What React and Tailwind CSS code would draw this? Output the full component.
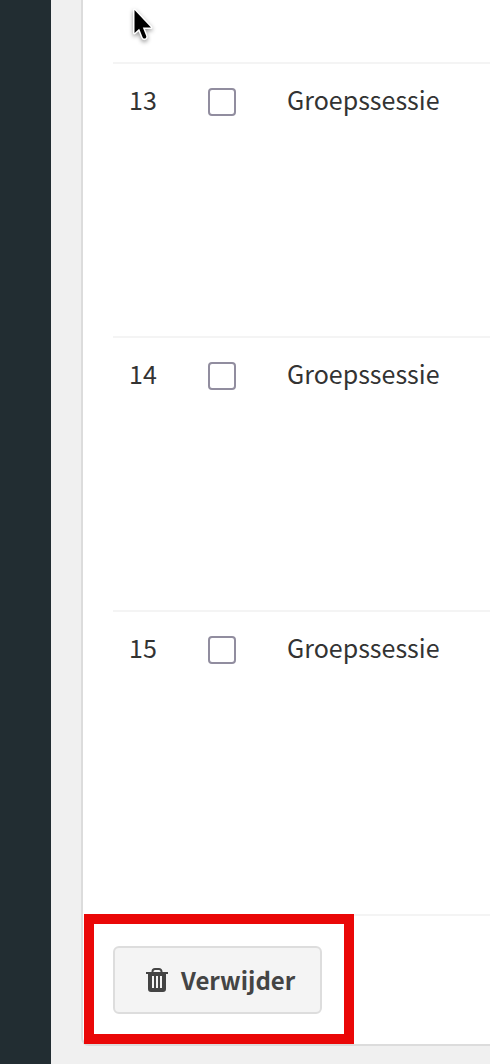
const sessions = [
  { id: 13, type: "Groepssessie" },
  { id: 14, type: "Groepssessie" },
  { id: 15, type: "Groepssessie" },
];

function TrashIcon() {
  return (
    <svg viewBox="0 0 22 24" className="w-[22px] h-6 shrink-0" aria-hidden="true">
      <path d="M6.5 4.5V3.5a2.5 2.5 0 0 1 2.5-2.5h4a2.5 2.5 0 0 1 2.5 2.5v1" fill="none" stroke="#444444" strokeWidth="2" />
      <path
        fillRule="evenodd"
        fill="#444444"
        d="M0 4h22v2h-2v15a3 3 0 0 1-3 3H5a3 3 0 0 1-3-3V6H0zM6 8v12h2V8zM10 8v12h2V8zM14 8v12h2V8z"
      />
    </svg>
  );
}

function Pointer() {
  return (
    <svg
      viewBox="0 0 24 36"
      className="absolute left-[130px] top-[6px] w-6 h-9 drop-shadow-[0_2px_2px_rgba(0,0,0,0.4)]"
      aria-hidden="true"
    >
      <path
        d="M4.5 4v23l4.700-4.200 3.400 8.500c.5 1.200 1.600 1.500 2.600 1.100s1.400-1.500.9-2.600L12.800 21.500H21z"
        fill="#000000"
        stroke="#ffffff"
        strokeWidth="3"
        strokeLinejoin="round"
        paintOrder="stroke"
      />
    </svg>
  );
}

export default function App() {
  return (
    <div className="relative flex min-h-screen overflow-hidden bg-[#f0f0f0] text-[#333333] font-['Noto_Sans_CJK_SC','Noto_Sans',sans-serif]">
      <aside className="w-[51px] shrink-0 bg-[#222d32]" />

      <main className="flex-1 pl-[30px] pb-[18px]">
        <div className="rounded-bl-lg border-l-2 border-b-2 border-[#dcdcdc] bg-white pt-[62px]">
          <div className="pl-[30px] pb-[29px]">
            <table className="w-full table-fixed border-collapse text-left text-[25px] leading-[30px]">
              <tbody>
                {sessions.map((session) => (
                  <tr key={session.id} className="h-[274px] border-t-2 border-[#f4f4f4] align-top">
                    <td className="w-[79px] px-4 pt-5">{session.id}</td>
                    <td className="w-[79px] px-4 pt-6">
                      <input
                        type="checkbox"
                        aria-label={`Selecteer ${session.type} ${session.id}`}
                        className="block size-7 appearance-none rounded border-2 border-[#918d9f] bg-white checked:bg-[#918d9f]"
                      />
                    </td>
                    <td className="px-4 pt-5">{session.type}</td>
                  </tr>
                ))}
              </tbody>
            </table>
          </div>

          <div className="relative pl-[30px] pt-8 pb-[30px]">
            <hr className="absolute left-[30px] right-0 top-0 border-t-2 border-[#f4f4f4]" />
            <button
              type="button"
              className="flex h-[68px] items-center gap-[13px] rounded-md border-2 border-[#dddddd] bg-[#f4f4f4] pl-[31px] pr-[25px] text-2xl font-bold text-[#444444]"
            >
              <TrashIcon />
              Verwijder
            </button>
            <div className="pointer-events-none absolute left-px top-0 h-[130px] w-[270px] border-10 border-[#ea0707]" />
          </div>
        </div>
      </main>

      <Pointer />
    </div>
  );
}
